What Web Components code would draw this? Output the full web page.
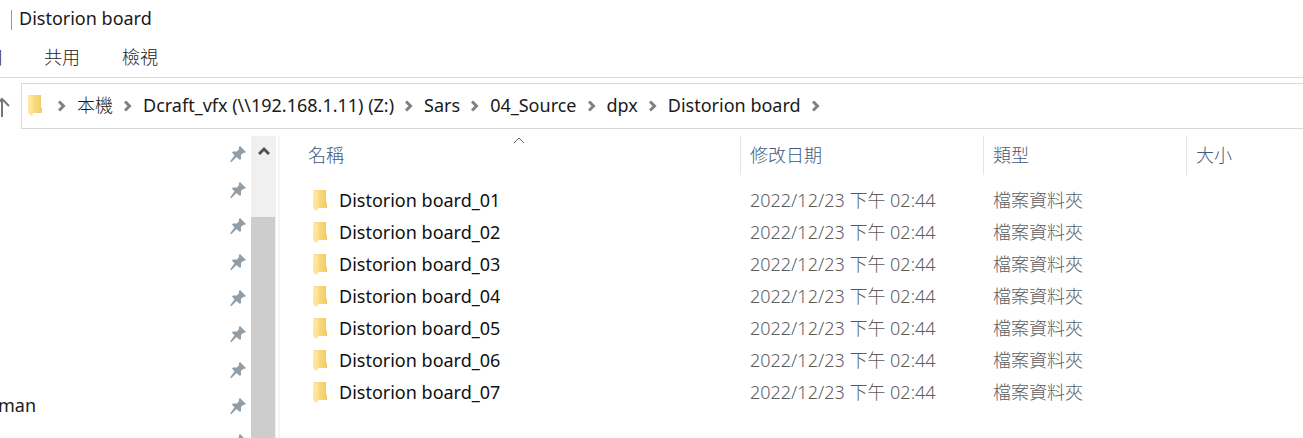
<!DOCTYPE html>
<html lang="zh-Hant">
<head>
<meta charset="utf-8">
<title>Distorion board</title>
<style>
body{margin:0;background:#fff;color:#1a1a1a;font:400 18px/24px "Noto Sans","Noto Sans CJK TC",sans-serif}
</style>
</head>
<body>
<explorer-window>
  <title-bar slot="title">Distorion board</title-bar>
  <ribbon-tabs slot="tabs">
    <ribbon-tab clipped>常用</ribbon-tab><ribbon-tab>共用</ribbon-tab><ribbon-tab>檢視</ribbon-tab>
  </ribbon-tabs>
  <address-bar slot="address">
    <path-crumb light>本機</path-crumb><path-crumb>Dcraft_vfx (\\192.168.1.11) (Z:)</path-crumb><path-crumb>Sars</path-crumb><path-crumb>04_Source</path-crumb><path-crumb>dpx</path-crumb><path-crumb>Distorion board</path-crumb>
  </address-bar>
  <quick-access slot="nav">
    <pinned-item></pinned-item>
    <pinned-item></pinned-item>
    <pinned-item></pinned-item>
    <pinned-item></pinned-item>
    <pinned-item></pinned-item>
    <pinned-item></pinned-item>
    <pinned-item></pinned-item>
    <pinned-item>man</pinned-item>
    <pinned-item></pinned-item>
  </quick-access>
  <scroll-bar slot="nav"></scroll-bar>
  <file-list slot="files"></file-list>
</explorer-window>
<script>
function define(name, html, setup) {
  const template = document.createElement('template');
  template.innerHTML = html;
  customElements.define(name, class extends HTMLElement {
    constructor() {
      super();
      this.attachShadow({mode: 'open'}).append(template.content.cloneNode(true));
    }
    connectedCallback() { if (setup) setup(this.shadowRoot); }
  });
}

define('explorer-window', `
<style>
:host{display:flex;flex-direction:column;height:100vh;overflow:hidden}
main{display:flex;flex:1;min-height:0;padding-top:7px}
aside{display:flex;border-right:2px solid #f5f5f5;padding-right:2px}
section{flex:1;min-width:0;padding-left:17px}
</style>
<slot name="title"></slot><slot name="tabs"></slot><slot name="address"></slot>
<main><aside><slot name="nav"></slot></aside><section><slot name="files"></slot></section></main>`);

define('title-bar', `
<style>
:host{display:flex;align-items:flex-start;height:38px;padding-left:11px}
h1{margin:8px 0 0;padding:0 0 2px 8px;font:inherit;line-height:20px;background:linear-gradient(#999,#999) 0 100%/1px 20px no-repeat}
</style><h1><slot></slot></h1>`);

define('ribbon-tabs', `
<style>:host{display:flex;height:39px;border-bottom:1px solid #dadbdc}</style><slot></slot>`);

define('ribbon-tab', `
<style>
:host{display:flex;width:78px;justify-content:center}
:host([clipped]){width:23px;justify-content:flex-end;overflow:hidden}
button{border:0;padding:0 0 2px;background:none;font:inherit;font-weight:300;color:#222;white-space:nowrap}
:host([clipped]) button{padding-right:20px}
</style><button type="button"><slot></slot></button>`);

define('folder-icon', `
<style>:host{display:block;width:15px;height:22px;flex:none}svg{display:block}</style>
<svg width="15" height="22" viewBox="0 0 15 22" aria-hidden="true">
<defs><linearGradient id="b"><stop stop-color="#ffe394"/><stop offset="1" stop-color="#f2cb64"/></linearGradient>
<linearGradient id="f" x2="1" y2="1"><stop stop-color="#ffebaf"/><stop offset="1" stop-color="#ffdf85"/></linearGradient></defs>
<path d="M1 1H13V13L14 14V19H3Z" fill="url(#b)"/><path d="M0 1L4 3Q5 4 5 5V19L4 22L0 19Z" fill="url(#f)"/></svg>`);

define('address-bar', `
<style>
:host{display:flex;height:46px;padding-top:5px}
button{display:flex;width:21px;border:0;padding:14px 0 0;background:none;justify-content:flex-start}
nav{display:flex;flex:1;min-width:0;align-items:center;border:1px solid #d9d9d9;border-right:0;padding:0 0 2px 6px;box-sizing:border-box}
svg{display:block;flex:none}
folder-icon{margin-right:4px}
.end{margin:2px 0 0 11px}
</style>
<button type="button" aria-label="上移"><svg width="10" height="20" viewBox="0 0 10 20" fill="none" stroke="#777" stroke-width="2"><path d="M2 20V2M-5 9L2 2L9 9"/></svg></button>
<nav><folder-icon></folder-icon><slot></slot><svg class="end" width="8" height="12" viewBox="0 0 8 12" fill="none" stroke="#808080" stroke-width="3"><path d="M1 1.500L5.500 6L1 10.500"/></svg></nav>`);

define('path-crumb', `
<style>
:host{display:flex;align-items:center;white-space:nowrap}
:host([light]){font-weight:300}
svg{display:block;flex:none;margin:2px 11px 0 11px}
a{color:inherit;text-decoration:none}
</style>
<svg width="8" height="12" viewBox="0 0 8 12" fill="none" stroke="#808080" stroke-width="3" aria-hidden="true"><path d="M1 1.500L5.500 6L1 10.500"/></svg><a href="#"><slot></slot></a>`);

define('quick-access', `
<style>:host{display:block;width:251px;overflow:hidden}</style><slot></slot>`);

define('pinned-item', `
<style>
:host{display:flex;height:36px;align-items:center;justify-content:space-between;padding-right:5px}
svg{display:block}
span{margin-left:-2px;padding-bottom:2px}
</style>
<span><slot></slot></span>
<svg width="16" height="16" viewBox="0 0 16 16" aria-hidden="true"><path d="M10 0L16 6L14 7L13 7L11 9L11 13L10 14L6.500 11L1.500 16L0 15.500L4.500 9.500L2 6.500L3 5.500L7 5.500L9 3L9 1Z" fill="#929da6"/></svg>`);

define('scroll-bar', `
<style>
:host{display:flex;flex-direction:column;width:25px;background:#f0f0f0}
button{display:flex;height:81px;justify-content:center;border:0;padding:10px 0 0;background:none;flex:none;box-sizing:border-box}
div{flex:1;margin-right:1px;background:#cdcdcd}
</style>
<button type="button" aria-label="向上捲動"><svg width="12" height="10" viewBox="0 0 12 10" fill="none" stroke="#505050" stroke-width="3"><path d="M1 8L6 3L11 8"/></svg></button><div></div>`);

define('file-list', `
<style>
:host{display:block}
table{width:100%;table-layout:fixed;border-collapse:separate;border-spacing:0}
.name{width:443px}.date{width:243px}.type{width:203px}
th{position:relative;height:39px;padding:0 0 2px 9px;border-left:1px solid #e5e5e5;text-align:left;font-weight:300;box-sizing:border-box}
th:first-child{border-color:transparent;padding-left:10px}
th button{display:block;border:0;padding:0;background:none;font:inherit;color:#42597a}
th svg{position:absolute;top:0;left:50%;margin-left:-6px}
tbody::before{content:"";display:block;height:9px}
td{height:32px;padding:0 0 0 9px;color:#5c5c5c;font-weight:300;white-space:nowrap;border-left:1px solid transparent;box-sizing:border-box}
td:first-child{color:#111;font-weight:400;padding-left:15px}
td div{display:flex;align-items:center;gap:11px}
</style>
<table><colgroup><col class="name"><col class="date"><col class="type"><col></colgroup>
<thead><tr><th><button type="button">名稱</button><svg width="12" height="8" viewBox="0 0 12 8" fill="none" stroke="#666"><path d="M1 7L6 2L11 7"/></svg></th><th><button type="button">修改日期</button></th><th><button type="button">類型</button></th><th><button type="button">大小</button></th></tr></thead>
<tbody></tbody></table>`, root => {
  const body = root.querySelector('tbody');
  for (let i = 1; i <= 7; i++) {
    const row = body.insertRow();
    row.innerHTML = `<td><div><folder-icon></folder-icon><span>Distorion board_0${i}</span></div></td><td>2022/12/23 下午 02:44</td><td>檔案資料夾</td><td></td>`;
  }
});
</script>
</body>
</html>
